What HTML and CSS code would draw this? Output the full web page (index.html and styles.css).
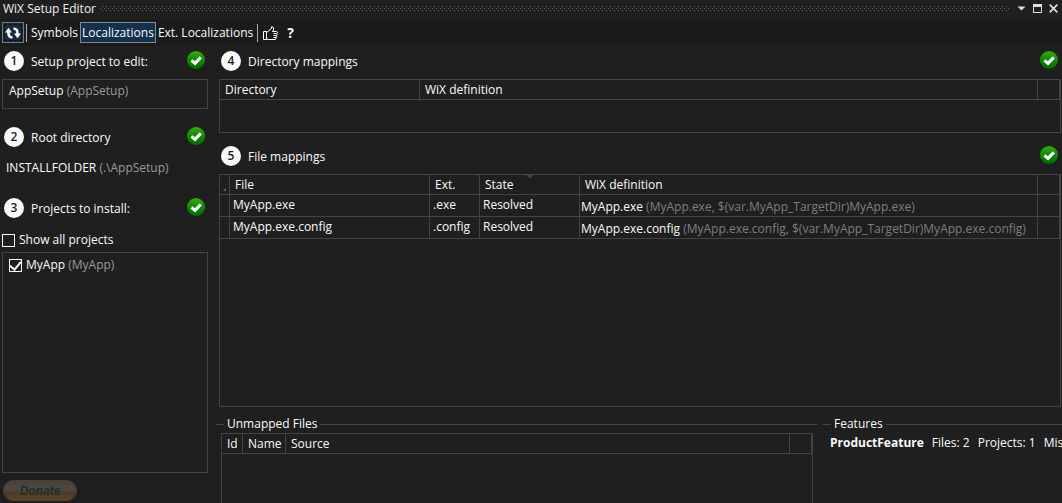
FILE: index.html
```html
<!DOCTYPE html>
<html lang="en">
<head>
<meta charset="utf-8">
<title>WiX Setup Editor</title>
<link rel="stylesheet" href="styles.css">
</head>
<body>
<svg width="0" height="0" class="defs" aria-hidden="true">
  <defs>
    <linearGradient id="green" x1="0" y1="0" x2="0" y2="1"><stop offset="0" stop-color="#35ad0c"/><stop offset="0.5" stop-color="#118a04"/><stop offset="1" stop-color="#006c00"/></linearGradient>
    <symbol id="ok" viewBox="0 0 18 18"><circle cx="9" cy="9" r="9" fill="url(#green)"/><path d="M4.5 9.300 8 12.400 13.800 6.400" fill="none" stroke="#fff" stroke-width="3"/></symbol>
  </defs>
</svg>
<div class="window">
  <header class="titlebar">
    <h1 class="title">WiX Setup Editor</h1>
    <svg class="grip" height="5" aria-hidden="true"><defs><pattern id="dots" width="4" height="4" patternUnits="userSpaceOnUse"><path d="M0 2h1v1h-1zM2 0h1v1h-1z" fill="#626262"/></pattern></defs><rect width="100%" height="5" fill="url(#dots)"/></svg>
    <button class="win-btn" aria-label="Window options"><svg width="9" height="9" viewBox="0 0 9 9"><path d="M.5 2.500h8l-4 4z" fill="#ddd"/></svg></button>
    <button class="win-btn" aria-label="Maximize"><svg width="9" height="9" viewBox="0 0 9 9"><path d="M0 0h9v9H0zM1 3v5h7V3z" fill="#ddd" fill-rule="evenodd"/></svg></button>
    <button class="win-btn" aria-label="Close"><svg width="9" height="9" viewBox="0 0 9 9"><path d="M.7.7 8.300 8.300M8.300.7.7 8.300" stroke="#ddd" stroke-width="1.700"/></svg></button>
  </header>

  <nav class="toolbar" aria-label="Tools">
    <button class="tool tool-refresh" aria-label="Refresh"><svg width="16" height="12" viewBox="0 0 16 12"><g fill="none" stroke="#fff" stroke-width="2.600"><path d="M7.500 10.500C4.500 10.300 3.200 8.500 3.500 4.500"/><path d="M8.500 1.500C11.500 1.700 12.800 3.500 12.500 7.500"/></g><path d="M0 5.400 3.500.8 7 5.400zM9 6.600h7l-3.500 4.600z" fill="#fff"/></svg></button>
    <span class="sep"></span>
    <button class="tool">Symbols</button>
    <button class="tool tool-active" aria-pressed="true">Localizations</button>
    <button class="tool">Ext. Localizations</button>
    <span class="sep"></span>
    <button class="tool tool-like" aria-label="Like"><svg width="15" height="14" viewBox="0 0 15 14" fill="none" stroke="#fff"><path d="M.5 5.500h3v8h-3zM3.500 6.500 8.500 2.500V.8h1.200l.8 1.200v2l-1 1.500h4c1.300 0 1.300 2 0 2 1 .2.800 2 0 2 .6.300.400 2-.5 2 .3.500 0 2-1 2h-7l-2-1M10.500 7.500h3M10.500 9.500h3M10.500 11.500h2.500"/></svg></button>
    <button class="tool tool-help" aria-label="Help">?</button>
  </nav>

  <main class="workspace">
    <section class="sidebar">
      <div class="step"><span class="num">1</span><h2 class="step-title">Setup project to edit:</h2><svg class="ok" role="img" aria-label="OK"><use href="#ok"/></svg></div>
      <div class="box setup-project">AppSetup <span class="dim">(AppSetup)</span></div>
      <div class="step step-root"><span class="num">2</span><h2 class="step-title">Root directory</h2><svg class="ok" role="img" aria-label="OK"><use href="#ok"/></svg></div>
      <p class="root-dir">INSTALLFOLDER <span class="dim">(.\AppSetup)</span></p>
      <div class="step"><span class="num">3</span><h2 class="step-title">Projects to install:</h2><svg class="ok" role="img" aria-label="OK"><use href="#ok"/></svg></div>
      <label class="check show-all"><input type="checkbox">Show all projects</label>
      <div class="box projects"><label class="check"><input type="checkbox" checked><span>MyApp <span class="dim">(MyApp)</span></span></label></div>
      <button class="donate" disabled>Donate</button>
    </section>

    <section class="content">
      <div class="step"><span class="num">4</span><h2 class="step-title">Directory mappings</h2><svg class="ok" role="img" aria-label="OK"><use href="#ok"/></svg></div>
      <div class="box directories">
        <table class="grid">
          <colgroup><col class="w200"><col><col class="w22"></colgroup>
          <thead><tr><th>Directory</th><th>WiX definition</th><th></th></tr></thead>
        </table>
      </div>
      <div class="step step-files"><span class="num">5</span><h2 class="step-title">File mappings</h2><svg class="ok" role="img" aria-label="OK"><use href="#ok"/></svg></div>
      <div class="box files">
        <table class="grid">
          <colgroup><col class="w10"><col class="w200"><col class="w50"><col class="w100"><col><col class="w22"></colgroup>
          <thead><tr><th class="corner"><svg width="3" height="3" viewBox="0 0 3 3"><path d="M3 0v3H0z" fill="#666"/></svg></th><th>File</th><th>Ext.</th><th class="sorted">State</th><th>WiX definition</th><th></th></tr></thead>
          <tbody>
            <tr><td></td><td>MyApp.exe</td><td>.exe</td><td>Resolved</td><td class="def">MyApp.exe <span class="dimmer">(MyApp.exe, $(var.MyApp_TargetDir)MyApp.exe)</span></td><td></td></tr>
            <tr><td></td><td>MyApp.exe.config</td><td>.config</td><td>Resolved</td><td class="def">MyApp.exe.config <span class="dimmer">(MyApp.exe.config, $(var.MyApp_TargetDir)MyApp.exe.config)</span></td><td></td></tr>
          </tbody>
        </table>
      </div>
      <div class="bottom">
        <section class="group">
          <h2 class="legend">Unmapped Files</h2>
          <div class="box unmapped">
            <table class="grid">
              <colgroup><col class="w21"><col class="w43"><col><col class="w22"></colgroup>
              <thead><tr><th>Id</th><th>Name</th><th>Source</th><th></th></tr></thead>
            </table>
          </div>
        </section>
        <section class="group">
          <h2 class="legend">Features</h2>
          <div class="feature"><strong>ProductFeature</strong><span>Files: 2</span><span>Projects: 1</span><span>Mis</span></div>
        </section>
      </div>
    </section>
  </main>
</div>
</body>
</html>
```
FILE: styles.css
```css
* { box-sizing: border-box; }
body {
  margin: 0;
  background: #1f1f1f;
  color: #fafafa;
  font: 12px/16px "Open Sans", "Noto Sans", sans-serif;
}
h1, h2, p { margin: 0; font-size: 12px; font-weight: 400; }
button { font: inherit; color: inherit; background: none; border: 0; padding: 0; }
svg { display: block; }
.defs { position: absolute; }
.window { display: flex; flex-direction: column; height: 100vh; overflow: hidden; }

.titlebar { display: flex; align-items: center; height: 19px; padding: 0 4px 2px 3px; flex: none; }
.title { color: #f0f0f0; margin-right: 4px; }
.grip { flex: 1; width: 0; margin-right: 8px; }
.win-btn { margin-left: 7px; }
.win-btn:first-of-type { margin-left: 0; }

.toolbar { display: flex; align-items: center; height: 27px; padding: 0 2px; background: #1b1b1b; flex: none; }
.tool { height: 21px; padding: 0 1px; border: 1px solid transparent; white-space: nowrap; }
.tool-refresh { width: 22px; padding: 0 2px; border-color: #777; background: #17293d; outline: 1px dashed #08121d; outline-offset: -3px; }
.tool-active { border-color: #888; background: #14304f; }
.sep { width: 1px; height: 18px; margin: 0 2px; background: #aaa; }
.tool-like { padding: 0 2px; }
.tool-help { margin-left: 4px; font-weight: 700; font-size: 14px; }

.workspace { display: flex; flex: 1; min-height: 0; }
.sidebar { display: flex; flex-direction: column; width: 208px; padding: 5px 0 2px 2px; flex: none; }
.content { display: flex; flex-direction: column; flex: 1; min-width: 0; padding: 5px 0 0 11px; }
.step { display: flex; align-items: center; height: 20px; padding: 0 3px 0 2px; flex: none; }
.content .step { padding-right: 4px; }
.num { width: 20px; height: 20px; border-radius: 50%; background: #fafafa; color: #1f1f1f; font-weight: 600; line-height: 20px; text-align: center; }
.step-title { flex: 1; margin-left: 7px; padding-top: 2px; }
.ok { width: 18px; height: 18px; margin-bottom: 2px; }
.box { border: 1px solid #434343; }
.dim { color: #9a9a9a; }
.dimmer { color: #7e7e7e; }

.setup-project { height: 30px; margin-top: 8px; padding: 3px 6px; flex: none; }
.step-root { margin-top: 18px; }
.root-dir { margin: 13px 0 22px; padding-left: 4px; }
.check { display: flex; align-items: center; height: 16px; }
.check input { appearance: none; width: 13px; height: 13px; margin: 0 4px 0 0; border: 1px solid #fafafa; display: grid; place-items: center; }
.check input:checked::before { content: ""; width: 5px; height: 9px; margin-top: -2px; border: solid #fafafa; border-width: 0 2px 2px 0; transform: rotate(40deg); }
.show-all { margin: 14px 0 4px; flex: none; }
.projects { flex: 1; padding: 4px 6px; }
.donate {
  width: 74px; height: 21px; margin: 7px 0 0 1px; flex: none;
  border: 1px solid #51402f; border-radius: 11px;
  background: linear-gradient(#45423e, #4c4740 45%, #4d3d20 65%, #56452a);
  color: #222b34; font: italic 700 12px "Liberation Sans", sans-serif;
}

.directories { height: 54px; margin: 8px 1px 0 0; flex: none; }
.step-files { margin-top: 13px; }
.files { flex: 1; margin: 8px 1px 0 0; min-height: 60px; }
.grid { width: 100%; table-layout: fixed; border-collapse: separate; border-spacing: 0; }
.grid th, .grid td { border: solid #434343; border-width: 0 1px 1px 0; white-space: nowrap; text-align: left; font-weight: 400; }
.grid th { height: 20px; padding: 0 5px; }
.grid td { height: 22px; padding: 0 3px 1px; }
.grid td.def { padding: 2px 1px 0; }
.grid .corner { padding: 0 3px 3px; vertical-align: bottom; }
.grid .sorted { background: linear-gradient(#434343, #434343) 50% 0 / 6px 1px no-repeat, linear-gradient(#434343, #434343) 50% 1px / 4px 1px no-repeat, linear-gradient(#434343, #434343) 50% 2px / 2px 1px no-repeat; }
.w10 { width: 10px; }
.w21 { width: 21px; }
.w22 { width: 22px; }
.w43 { width: 43px; }
.w50 { width: 50px; }
.w100 { width: 100px; }
.w200 { width: 200px; }

.bottom { display: grid; grid-template-columns: minmax(0, 1fr) 239px; gap: 5px; height: 87px; margin: 9px 0 0 -3px; flex: none; }
.group { display: flex; flex-direction: column; min-width: 0; overflow: hidden; }
.legend { display: flex; align-items: center; gap: 3px; white-space: nowrap; }
.legend::before, .legend::after { content: ""; height: 1px; background: #434343; }
.legend::before { width: 8px; }
.legend::after { flex: 1; }
.unmapped { flex: 1; margin: 1px 5px 0; border-bottom: 0; }
.feature { display: flex; gap: 8px; padding: 3px 0 0 7px; white-space: nowrap; }
```
